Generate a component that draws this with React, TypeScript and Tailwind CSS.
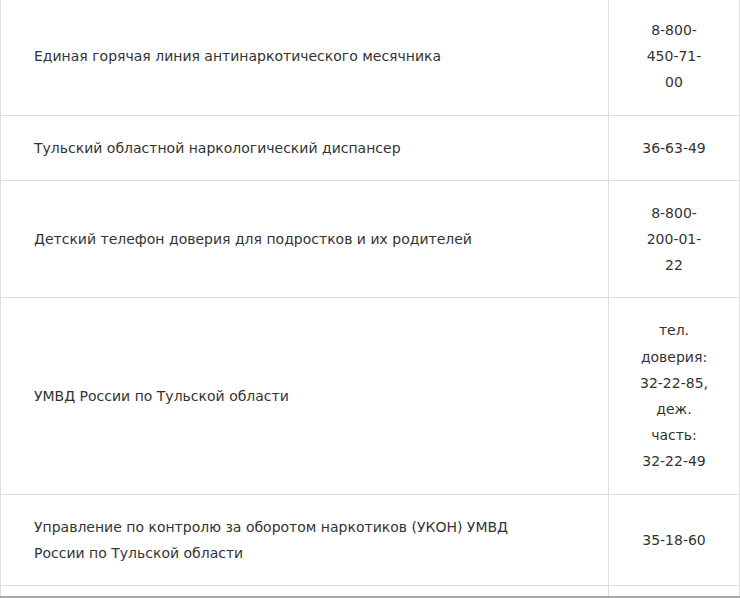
const ROWS = [
  { name: ['Единая горячая линия антинаркотического месячника'], phone: ['8-800-', '450-71-', '00'] },
  { name: ['Тульский областной наркологический диспансер'], phone: ['36-63-49'] },
  { name: ['Детский телефон доверия для подростков и их родителей'], phone: ['8-800-', '200-01-', '22'] },
  { name: ['УМВД России по Тульской области'], phone: ['тел.', 'доверия:', '32-22-85,', 'деж.', 'часть:', '32-22-49'] },
  {
    name: ['Управление по контролю за оборотом наркотиков (УКОН) УМВД', 'России по Тульской области'],
    phone: ['35-18-60'],
  },
  { name: [''], phone: [''] },
]

export default function App() {
  return (
    <div className="h-[598px] w-[740px] flex flex-col bg-white overflow-hidden font-['DejaVu_Sans',sans-serif] text-[14px] text-[#333]">
      <div className="flex-1 overflow-hidden">
        <table className="w-[740px] -mt-[3px] border-collapse">
          <tbody>
            {ROWS.map((row, i) => (
              <tr key={i} className={i === ROWS.length - 1 ? 'h-[40px]' : ''}>
                <td className="w-[608px] border border-[#dedede] pl-[33px] pr-4 py-[19px] leading-[26.2px] align-middle">
                  {row.name.map((line, j) => (
                    <div key={j}>{line}</div>
                  ))}
                </td>
                <td className="border border-[#dedede] py-[19px] leading-[26.2px] text-center align-middle">
                  {row.phone.map((line, j) => (
                    <div key={j}>{line}</div>
                  ))}
                </td>
              </tr>
            ))}
          </tbody>
        </table>
      </div>
      <div className="h-[2px] bg-[#a8a8a8]" />
    </div>
  )
}
